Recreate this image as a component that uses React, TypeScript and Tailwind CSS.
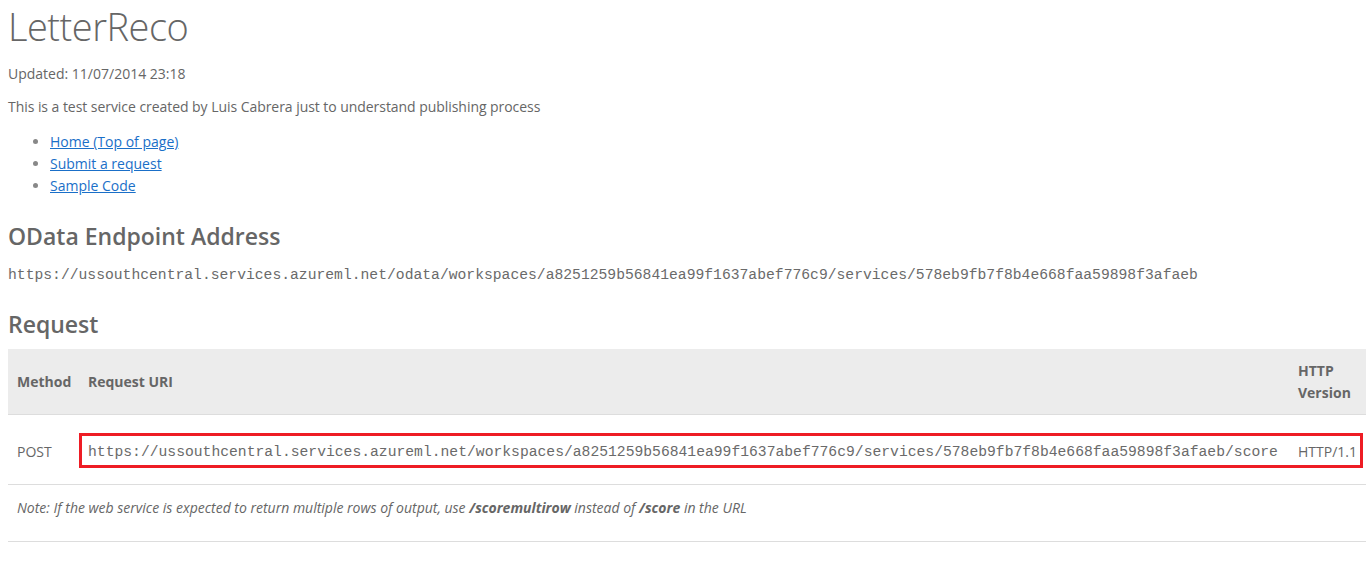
import React from "react";

export default function App() {
  return (
    <div className="w-[1368px] h-[561px] overflow-hidden bg-white text-[#666] pl-[8px] pr-[2px] font-['Open_Sans',sans-serif]">
      <h1 className="text-[38px] leading-[52px] font-light tracking-[-0.5px] text-[#666]">LetterReco</h1>
      <p className="mt-[12px] text-[14px] leading-[20px]">Updated: 11/07/2014 23:18</p>
      <p className="mt-[13px] text-[14px] leading-[20px] tracking-[-0.05px]">
        This is a test service created by Luis Cabrera just to understand publishing process
      </p>
      <ul className="mt-[14px] pl-[42px] list-disc text-[14px] leading-[22px] marker:text-[#888]">
        <li>
          <a href="#" className="text-[#1a6fc8] underline">Home (Top of page)</a>
        </li>
        <li>
          <a href="#" className="text-[#1a6fc8] underline">Submit a request</a>
        </li>
        <li>
          <a href="#" className="text-[#1a6fc8] underline">Sample Code</a>
        </li>
      </ul>
      <h2 className="mt-[24px] text-[23px] leading-[30px] font-semibold text-[#666]">OData Endpoint Address</h2>
      <p className="mt-[14px] text-[14.7px] leading-[20px] text-[#6a6a6a] font-['Liberation_Mono',monospace] whitespace-nowrap">
        https://ussouthcentral.services.azureml.net/odata/workspaces/a8251259b56841ea99f1637abef776c9/services/578eb9fb7f8b4e668faa59898f3afaeb
      </p>
      <h2 className="mt-[24px] text-[23px] leading-[30px] font-semibold text-[#666]">Request</h2>
      <div className="relative mt-[10px] w-[1358px]">
        <table className="w-full border-collapse text-[14px] leading-[22px] text-[#666]">
          <thead>
            <tr className="bg-[#ececec] h-[65px] border-b border-[#dddddd]">
              <th className="text-left font-bold pl-[9px] pr-[8px] pt-[2px] align-middle w-[72px] text-[#666]">Method</th>
              <th className="text-left font-bold px-[8px] pt-[2px] align-middle text-[#666]">Request URI</th>
              <th className="text-left font-bold px-[8px] pt-[2px] align-middle w-[76px] text-[#666]">
                HTTP
                <br />
                Version
              </th>
            </tr>
          </thead>
          <tbody>
            <tr className="h-[70px] border-b border-[#dddddd]">
              <td className="pl-[9px] pr-[8px] pt-[6px] align-middle text-[#666]">POST</td>
              <td className="px-[8px] pt-[6px] align-middle text-[14.7px] text-[#6a6a6a] font-['Liberation_Mono',monospace] whitespace-nowrap">
                https://ussouthcentral.services.azureml.net/workspaces/a8251259b56841ea99f1637abef776c9/services/578eb9fb7f8b4e668faa59898f3afaeb/score
              </td>
              <td className="px-[8px] pt-[6px] align-middle whitespace-nowrap text-[#666]">HTTP/1.1</td>
            </tr>
            <tr className="border-b border-[#dddddd]">
              <td colSpan={3} className="pl-[9px] pt-[12px] pb-[22px] italic text-[#666]">
                Note: If the web service is expected to return multiple rows of output, use{" "}
                <b className="font-bold">/scoremultirow</b> instead of <b className="font-bold">/score</b> in the URL
              </td>
            </tr>
          </tbody>
        </table>
        <div className="absolute left-[71px] top-[84px] w-[1284px] h-[35px] border-[3px] border-[#ee1c24] pointer-events-none" />
      </div>
    </div>
  );
}
